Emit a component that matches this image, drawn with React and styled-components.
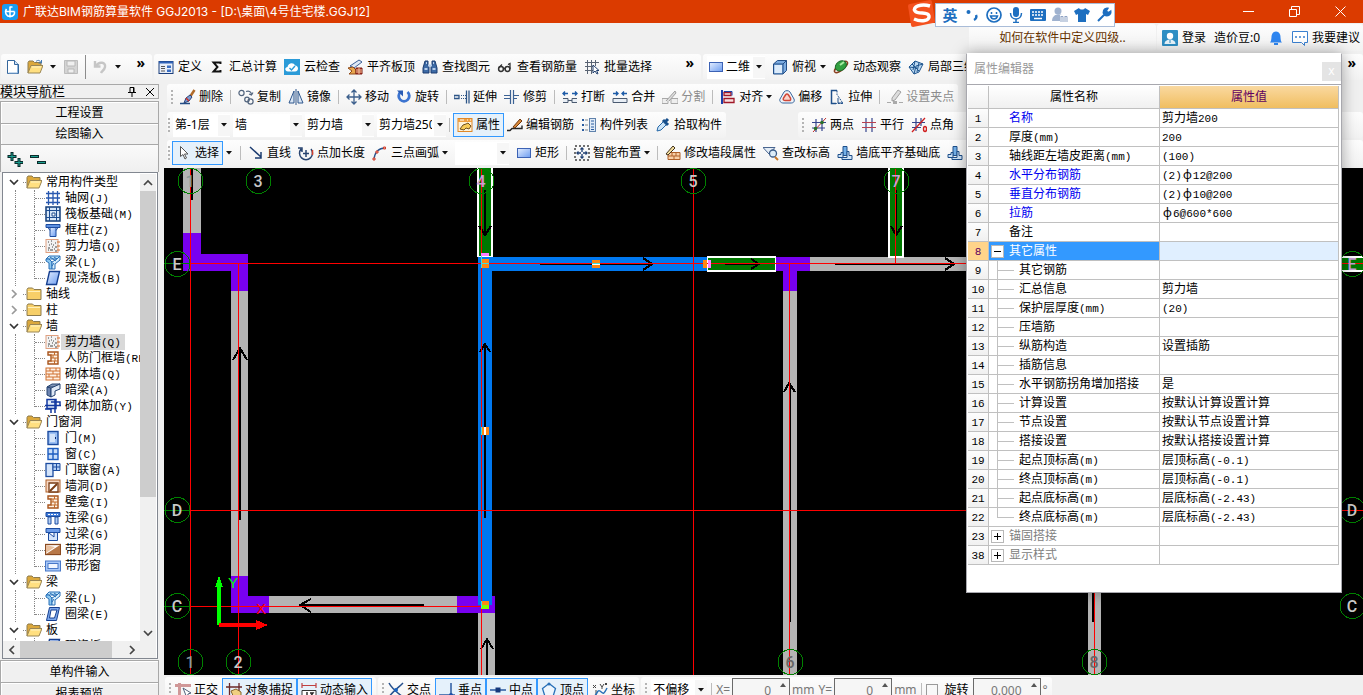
import React from 'react';
import styled, { createGlobalStyle, css } from 'styled-components';

const uiFont = '"Noto Sans", "Noto Sans CJK SC", sans-serif';
const line = '#a8a8a8';

const Global = createGlobalStyle`
  *, *::before, *::after { box-sizing: border-box; }
  body { margin: 0; background: #f0f0f0; overflow: hidden; }
  button, input, select { font: inherit; color: inherit; margin: 0; }
  h1, h2, ul { margin: 0; padding: 0; font: inherit; list-style: none; }
`;

/* ---------- icons ---------- */

const Svg = styled.svg`
  flex: none;
  display: block;
`;

const folderOpen = (
  <>
    <path d="M1 14V3.500l1-1.500h4l1.500 1.500H14V7" fill="#dba83c" stroke="#8d7b4d" />
    <path d="M1 14l3-7.500h12L13 14z" fill="#ffdf80" stroke="#9a8655" />
    <path d="M5 8h9" stroke="#fff3c4" />
  </>
);

const concrete = (
  <>
    <rect x="1" y="1.500" width="12" height="13" fill="#f2f2f2" stroke="#e0a080" />
    <path d="M3 4h1M6 3h1M10 5h1M4 7h1M8 7h1M3 10h2M7 9h1M10 9h2M3 12h1M5 12h3M9 11h1M10 13h2M6 6h1" stroke="#444" />
    <path d="M12 4h3M12 8h3M12 12h3" stroke="#d07030" />
  </>
);

const beam = (
  <>
    <path d="M1 5l3-3h11l-3 3z" fill="#b8e0f8" stroke="#2a70b8" />
    <path d="M1 5h3l3 3v7H4V9L1 7z" fill="#8cc8f0" stroke="#2a70b8" />
    <path d="M7 15V8l5-3 3-3v4l-5 4v5z" fill="#d8effc" stroke="#2a70b8" />
    <path d="M5 3l6 4M9 3l3 2M9 9l-2 3" stroke="#2a70b8" fill="none" />
  </>
);

const hole = (
  <>
    <path d="M3 2h10v12H3v-3h3V5H3z" fill="#fff3e6" stroke="#a8541c" strokeWidth="1.400" />
    <path d="M6 5h7M6 8h7M6 11h7M9.500 2v3M9.500 11v3M8 5v3M10 8v3" stroke="#c06828" />
  </>
);

const icons = {
  app: (
    <>
      <rect x="0" y="0" width="16" height="16" rx="3" fill="#1a9cf0" />
      <path d="M8 2.500v11M4 7.500h8.500M8 3h2.500M4.500 5C2 9 5 12.500 8 12.500s5-2 4.500-5" stroke="#fff" fill="none" strokeWidth="1.500" />
    </>
  ),
  file: (
    <>
      <path d="M2.500 1.500h7l4 4v9h-11z" fill="#fff" stroke="#34669c" />
      <path d="M9.500 1.500v4h4" fill="#cfe2f6" stroke="#34669c" />
      <path d="M12.500 6v8h-9" stroke="#8db4dc" fill="none" />
    </>
  ),
  open: (
    <>
      {folderOpen}
      <path d="M9 2.500c2-2 4-1 5 1M14.500 1v3h-3" stroke="#3f79b5" fill="none" />
    </>
  ),
  folder: folderOpen,
  folderClosed: (
    <>
      <path d="M1 13.500V3.500l1-1.500h4.500L8 3.500h7v10z" fill="#f7cf68" stroke="#8d7b4d" />
      <path d="M2 5.500h12" stroke="#fff0b8" />
    </>
  ),
  save: (
    <>
      <path d="M1.500 1.500h13v13h-13z" fill="#d4d4d4" stroke="#bdbdbd" />
      <path d="M4 2h8v5H4zM5 10h6v4H5z" fill="#efefef" stroke="#b8b8b8" />
    </>
  ),
  undo: (
    <path d="M3 2v5.500h5.500M4 7c3-5 10-4 9 1-.500 3-3 4-4 6" fill="none" stroke="#c6c6c6" strokeWidth="2.400" />
  ),
  define: (
    <>
      <rect x="1" y="2.500" width="14" height="12" fill="#e8eef8" stroke="#1b3f7c" />
      <path d="M1 3.500h14" stroke="#2f62b8" strokeWidth="2" />
      <path d="M3 7.500h4M3 9.500h4M3 12h4" stroke="#555" />
      <path d="M9 6.500h4v2.500H9zM9 10.500h4v2.500H9z" fill="#3a6fc4" />
    </>
  ),
  sigma: <path d="M11.500 5V3.500H4.500L8.500 8 4.500 12.500h7V11" fill="none" stroke="#111" strokeWidth="1.900" />,
  cloud: (
    <>
      <rect x="0" y="0" width="16" height="16" fill="#2b9bd8" />
      <path d="M4 12.500C0 12 1 8 3.500 8 4 3.500 10 3 11 6.500c4 0 4 6 0 6z" fill="#fff" />
      <path d="M5.500 9l2 2 3.500-4" fill="none" stroke="#2b9bd8" strokeWidth="1.400" />
    </>
  ),
  slab: (
    <>
      <path d="M3 7l9-6 3 2-8 6z" fill="#dfe9f5" stroke="#3a5f96" />
      <path d="M1 9l5-1 3 3v4H2l3-3z" fill="#e8a850" stroke="#914b18" />
      <path d="M9 9h6v6H9z" fill="#b03024" stroke="#7a1c12" />
      <path d="M9 11h6M9 13h6M12 9v6" stroke="#f0c8a0" />
    </>
  ),
  find: (
    <>
      <path d="M3 2h3v4l1 2v6H1V9zM10 2h3l2 7v5H9V8l1-2z" fill="#3e6ba6" stroke="#1c3d70" />
      <path d="M6 6.500h4M2.500 10h3M10.500 10h3M4 4h1M11 4h1" stroke="#b8cfec" strokeWidth="2" />
    </>
  ),
  glasses: (
    <>
      <circle cx="4" cy="10" r="2.400" fill="none" stroke="#333" strokeWidth="1.500" />
      <circle cx="10.500" cy="10" r="2.400" fill="none" stroke="#333" strokeWidth="1.500" />
      <path d="M6.500 9.500h2M2 8.500l3-3M13 10V4.500l-2 1" fill="none" stroke="#333" strokeWidth="1.300" />
    </>
  ),
  batch: (
    <>
      <path d="M1 3.500h14M1 7.500h9M1 11.500h8M3.500 1v14M7.500 1v14M11.500 1v6" stroke="#5a6473" fill="none" />
      <path d="M9 6v8l2-2 2 3 1-.500-1.500-3H15z" fill="#fff" stroke="#22406e" />
    </>
  ),
  rect: <rect x="1.500" y="3.500" width="13" height="9" fill="url(#blue)" stroke="#3c62b4" />,
  cube: (
    <>
      <path d="M1.500 5l4-3.500h9v10L11 15H1.500z" fill="#7cabe0" stroke="#234e86" />
      <path d="M1.500 5H11v10M11 5l3.500-3.500" fill="none" stroke="#234e86" />
      <path d="M2.500 6H10v8H2.500z" fill="#dcebfa" />
    </>
  ),
  orbit: (
    <>
      <ellipse cx="8" cy="8" rx="8" ry="3" transform="rotate(-40 8 8)" fill="none" stroke="#8a4020" strokeWidth="1.500" />
      <ellipse cx="8.500" cy="7" rx="6" ry="4.500" transform="rotate(-35 8 8)" fill="#32a040" stroke="#1c6a2a" />
      <path d="M7 6l4-3" stroke="#a6eaa0" strokeWidth="2" />
    </>
  ),
  partial: (
    <>
      <path d="M1 8l6-6 8 3-4 8-5 2z" fill="#bcd9f2" stroke="#1e558e" />
      <path d="M4 5l7 7M1 8l8 1M7 2l-2 9M11 3.500L9 13M6 15l2-8 7-2" fill="none" stroke="#1e558e" />
    </>
  ),
  erase: (
    <>
      <path d="M0 14.500h10" stroke="#234e86" strokeWidth="1.500" />
      <path d="M14.500 1l-4 6" stroke="#b06a28" strokeWidth="2.500" />
      <path d="M10 6l2 2-3 4-5 2 2-5z" fill="#7f9cd0" stroke="#27427a" />
      <path d="M6 9l3 3" stroke="#c83028" strokeWidth="1.500" />
    </>
  ),
  copy: (
    <g fill="none" stroke="#53657e" strokeWidth="1.200">
      <circle cx="3.500" cy="4" r="2.600" />
      <circle cx="9" cy="10.500" r="2.300" />
      <circle cx="12.500" cy="12.500" r="2.600" />
      <path d="M8 2.500c3-1 5 0 5.500 3M15 3.500l-1.500 2.500-2.500-1" />
    </g>
  ),
  mirror: (
    <>
      <path d="M6 2v12H1zM10 2v12h5z" fill="#dbe7f5" stroke="#2e568c" />
      <path d="M8 0v16" stroke="#2e568c" />
    </>
  ),
  move: (
    <path d="M8 1v14M1 8h14M5.500 3.500L8 1l2.500 2.500M5.500 12.500L8 15l2.500-2.500M3.500 5.500L1 8l2.500 2.500M12.500 5.500L15 8l-2.500 2.500" fill="none" stroke="#3c5f8c" strokeWidth="1.300" />
  ),
  rotate: (
    <>
      <path d="M11.500 3a5.300 5.300 0 1 1-7 0" fill="none" stroke="#3c74d0" strokeWidth="2.800" />
      <path d="M1 1.500h6v6z" fill="#2a5cb4" />
    </>
  ),
  extend: (
    <>
      <path d="M0 6.500h5v3H0zM12.500 1.500v13M15 1.500v13" fill="none" stroke="#2e5688" strokeWidth="1.300" />
      <path d="M7 6.500h5M7 9.500h5" stroke="#2e5688" strokeDasharray="1 1" />
    </>
  ),
  trim: (
    <path d="M6.500 1v14M9.500 1v14M0 6.500h6M0 9.500h6M10 6.500h5M10 9.500h3" fill="none" stroke="#3c6294" strokeWidth="1.200" />
  ),
  split: (
    <>
      <path d="M1 9.500h5v4H1M15 9.500h-5v4h5M6 11.500h4" fill="#e8eef5" stroke="#4a5a70" />
      <path d="M1 4.500h5M10 4.500h5M3 2.500l-2 2 2 2M13 2.500l2 2-2 2" fill="none" stroke="#1e5ca8" strokeWidth="1.400" />
    </>
  ),
  merge: (
    <>
      <path d="M1 9.500h14v4H1z" fill="#e8eef5" stroke="#4a5a70" />
      <path d="M1 4.500h5M10 4.500h5M4 2.500l2 2-2 2M12 2.500l-2 2 2 2" fill="none" stroke="#1e5ca8" strokeWidth="1.400" />
    </>
  ),
  cut: (
    <>
      <path d="M0 9.500h6v5H0zM9 9.500h7v5H9z" fill="#eee" stroke="#a8a8a8" />
      <path d="M4 12l9-10 1 2-7 8" fill="#ddd" stroke="#a0a0a0" />
    </>
  ),
  align: (
    <>
      <path d="M2 1v14" stroke="#1c3fa8" strokeWidth="2" />
      <path d="M4 3.500h7v3H4zM4 9.500h10v4H4z" fill="#f8e0e0" stroke="#a01828" strokeWidth="1.300" />
      <path d="M4 2.500h8v4" stroke="#1c3fa8" fill="none" />
    </>
  ),
  offset: (
    <>
      <path d="M5 3a4 4 0 0 1 6 0l4 7c1 3-1 4-3 4H4c-2 0-4-2-3-4z" fill="#f0f3f8" stroke="#38669c" />
      <path d="M6.500 6c1-1.500 2-1.500 3 0l2 3c.500 2 0 2.500-1.500 2.500H6c-2 0-2-1-1.500-2.500z" fill="#fbd3cb" stroke="#d04838" strokeWidth="1.500" />
    </>
  ),
  stretch: (
    <>
      <path d="M8 1.500H2.500v13H7" fill="none" stroke="#1e4f8a" strokeWidth="1.500" />
      <path d="M8 1.500v4l6 9H7" fill="none" stroke="#1e4f8a" strokeDasharray="2 1" />
      <path d="M9 9v5h5" fill="none" stroke="#1e4f8a" />
    </>
  ),
  grip: (
    <>
      <path d="M0 13.500h4M12 13.500h4" stroke="#aaa" />
      <path d="M5 9l6-8 3 2-6 8-3 1z" fill="#ddd" stroke="#a0a0a0" />
      <path d="M6 12h4v3H6z" fill="#aaa" />
    </>
  ),
  props: (
    <>
      <rect x="1" y="1.500" width="14" height="13" fill="#fff2d8" stroke="#e08828" />
      <path d="M1 3.500h14" stroke="#f0a040" strokeWidth="3" />
      <path d="M3 3h4M10 3h1M13 3h1" stroke="#fff" />
      <path d="M3 12l3-4 3-1 2-1 3 3-2 3-3-1-2 2z" fill="#f7cb58" stroke="#70501c" />
    </>
  ),
  editBar: (
    <>
      <path d="M0 13.500h3l2-2h10v-3" fill="none" stroke="#222" strokeWidth="1.400" />
      <path d="M6 10l7-8 2 2-7 7z" fill="#d88838" stroke="#703810" />
    </>
  ),
  list: (
    <>
      <path d="M1 3h2M1 8h2M1 13h2" stroke="#2a5ca0" strokeWidth="2" />
      <path d="M4 3h3M4 8h3M4 13h3" stroke="#808890" />
      <rect x="8.500" y="1.500" width="6" height="13" fill="#e0ebf7" stroke="#6082ac" />
      <path d="M10 4h3M10 7h3M10 10h3M10 12.500h3" stroke="#2a5ca0" />
    </>
  ),
  pick: (
    <>
      <path d="M2 14l1-4 6-6 3 3-6 6z" fill="#cde5f8" stroke="#2668a8" />
      <path d="M8 3l5 5M10 5l3-3" stroke="#174f8c" strokeWidth="3" />
    </>
  ),
  twoPoint: (
    <>
      <path d="M5 2v13M11 1v13M1 5.500h14M1 11h13" stroke="#34448c" strokeWidth="1.200" />
      <path d="M2 15L15 1" stroke="#c03030" />
      <circle cx="4.500" cy="11.500" r="1.800" fill="#287028" />
      <circle cx="11" cy="5.500" r="1.800" fill="#287028" />
    </>
  ),
  parallel: (
    <>
      <path d="M5 1v14M11 1v14" stroke="#34448c" strokeWidth="1.200" />
      <path d="M1 5.500h14M1 10.500h14" stroke="#b84050" strokeWidth="1.200" />
    </>
  ),
  pointAngle: (
    <>
      <path d="M5 1v13M10 1v8M1 5.500h13M1 10.500h9" stroke="#34448c" strokeWidth="1.200" />
      <path d="M1 15L14 1" stroke="#d02020" strokeWidth="1.300" />
      <ellipse cx="14" cy="12" rx="1.500" ry="2.500" fill="none" stroke="#d02020" strokeWidth="1.400" />
    </>
  ),
  cursor: <path d="M4.500 1.500v10l2.500-2 2 4.500 1.500-1-2-4H12z" fill="#fff" stroke="#555" />,
  lineTool: (
    <path d="M2 2l11 10M13 7v6H7" fill="none" stroke="#1c3c70" strokeWidth="1.500" />
  ),
  pointLen: (
    <>
      <path d="M3 4a6.500 6.500 0 1 0 10 0M0 3h4v4M8 5v7M5 8.500h6" fill="none" stroke="#284470" strokeWidth="1.500" />
      <path d="M14.500 10V5" stroke="#d04030" strokeWidth="1.500" />
    </>
  ),
  arc: (
    <>
      <path d="M2 14C3 7 7 3 13 3" fill="none" stroke="#28528c" strokeWidth="1.400" />
      <path d="M1 13h2v2H1zM4 6h2v2H4zM11.500 2h2v2h-2z" fill="#f0b0a0" stroke="#d04030" />
    </>
  ),
  smart: (
    <>
      <rect x="1" y="1" width="14" height="14" fill="none" stroke="#444" strokeDasharray="2 2" strokeWidth="1.500" />
      <path d="M8 3v10M3 8h10" stroke="#1c3c70" strokeWidth="1.300" strokeDasharray="4 2" />
      <path d="M6.500 4.500L8 3l1.500 1.500M6.500 11.500L8 13l1.500-1.500M4.500 6.500L3 8l1.500 1.500M11.500 6.500L13 8l-1.500 1.500" fill="none" stroke="#1c3c70" strokeWidth="1.300" />
    </>
  ),
  editWall: (
    <>
      <path d="M3 7.500h12v7H3z" fill="#f8d0a8" stroke="#b06028" />
      <path d="M3 11h12M7 7.500V11M11 7.500V11M9 11v4" stroke="#b06028" />
      <path d="M1 9l7-8 2 2-7 7z" fill="#f4e0a0" stroke="#42321c" />
    </>
  ),
  elev: (
    <>
      <path d="M0 2.500h12L6 9z" fill="#e4edf6" stroke="#4a6690" />
      <circle cx="10" cy="8.500" r="3.500" fill="#dcecf8" stroke="#3c5c88" strokeWidth="1.300" />
      <path d="M12 12l3 3" stroke="#c87828" strokeWidth="2" />
    </>
  ),
  wallBase: (
    <>
      <path d="M6 1.500h4v9H6z" fill="#74b0e8" stroke="#1e4f8a" />
      <path d="M1 9.500h3v-2h2v5H1zM10 6.500h2v4h3v4H5v-2h5z" fill="#cfe4f8" stroke="#1e4f8a" />
    </>
  ),
  axis: (
    <path d="M1 3.500h14M1 8h14M1 12.500h14M3.500 1v14M8 1v14M12.500 1v14" stroke="#2858b0" strokeWidth="1.300" />
  ),
  raft: (
    <>
      <rect x="1" y="1" width="14" height="14" fill="#d6e6f8" stroke="#123c78" strokeWidth="1.500" />
      <path d="M4.500 4.500h7v7h-7zM4.500 1v14M11.500 1v14M1 4.500h14M1 11.500h14" fill="none" stroke="#1c4c90" />
      <path d="M7 7h3v3H7z" fill="#fff" stroke="#1c4c90" />
    </>
  ),
  column: (
    <>
      <path d="M1 2.500h14v3H1z" fill="#5c8fe0" stroke="#1c4ca0" />
      <path d="M5 5.500h6v9H5z" fill="url(#blue)" stroke="#1c4ca0" />
      <path d="M3 5.500l2 3M13 5.500l-2 3" stroke="#1c4ca0" />
    </>
  ),
  concrete,
  beam,
  plate: <path d="M4.500 1.500h10l-3 13h-10z" fill="url(#blue)" stroke="#163f90" strokeWidth="1.400" />,
  hole,
  brick: (
    <>
      <rect x="1" y="2" width="14" height="12" fill="#fff1e4" stroke="#d07030" />
      <path d="M1 5h14M1 8h14M1 11h14M5 2v3M11 2v3M8 5v3M4 8v3M12 8v3M8 11v3" stroke="#d07030" />
    </>
  ),
  hiddenBeam: (
    <>
      <path d="M2 5l5-3h8l-5 3z" fill="#8498b8" stroke="#22406e" />
      <path d="M2 5l4 1v9l-4-2z" fill="#6c84b0" stroke="#22406e" />
      <path d="M6 6l9-4v5l-5 2v4l-4 2z" fill="#dfe9f6" stroke="#22406e" />
    </>
  ),
  masonry: (
    <>
      <path d="M2 1.500h9v9H2z" fill="#e0ebfa" stroke="#1238a0" strokeWidth="1.500" />
      <path d="M0 7.500h16M0 11h6v4M10 1v14M6 4h9v4" fill="none" stroke="#1238a0" strokeWidth="1.500" />
    </>
  ),
  door: (
    <>
      <rect x="3" y="1.500" width="10" height="13" fill="#9cc0f4" stroke="#1c4ca0" strokeWidth="1.400" />
      <path d="M5 4h5v8H5z" fill="#d4e4fa" />
      <path d="M10.500 7v2" stroke="#0c2c70" />
    </>
  ),
  window: (
    <>
      <rect x="3" y="2.500" width="10" height="11" fill="#c8defa" stroke="#1c5cc0" strokeWidth="1.400" />
      <path d="M8 2v12M3 8h10" stroke="#1c5cc0" strokeWidth="1.400" />
    </>
  ),
  doorWindow: (
    <>
      <rect x="1" y="1.500" width="7" height="13" fill="#d4e4fa" stroke="#1c4ca0" strokeWidth="1.300" />
      <path d="M8 1.500h7v7H8zM11.500 2v6M8 5h7" fill="#b4d0f6" stroke="#1c4ca0" />
    </>
  ),
  wallHole: (
    <>
      <rect x="1" y="2" width="14" height="12" fill="#f7d8c4" stroke="#b06028" />
      <path d="M4 5h9v9H4z" fill="#fff" stroke="#7a3c14" strokeWidth="1.300" />
      <path d="M5 13l7-7" stroke="#7a3c14" strokeWidth="2" />
    </>
  ),
  linkBeam: (
    <>
      <path d="M1 2.500h14v4H1z" fill="#3e7ad8" stroke="#1c4ca0" />
      <path d="M3 7h3v7H3zM10 7h3v7h-3z" fill="#b4d0f6" stroke="#1c4ca0" />
      <path d="M3 4.500h10" stroke="#fff" strokeDasharray="2 1" />
    </>
  ),
  lintel: (
    <>
      <path d="M1 2.500h14v4H1z" fill="#6c9ce8" stroke="#1c4ca0" />
      <path d="M3.500 6.500h9v8h-9z" fill="#d4e4fa" stroke="#1c4ca0" />
      <path d="M4 7l5 4V7" stroke="#1c4ca0" fill="#fff" />
    </>
  ),
  stripHole: (
    <>
      <rect x="0.500" y="2.500" width="15" height="10" fill="#fff" stroke="#8a4a20" strokeWidth="1.300" />
      <path d="M1 12L15 3v9z" fill="#b87848" />
      <path d="M1 3v8l9-6z" fill="#e8c0a0" />
    </>
  ),
  stripWindow: (
    <>
      <rect x="0.500" y="3" width="15" height="10" fill="#a8c8f8" stroke="#4878c8" />
      <rect x="3" y="5.500" width="10" height="5" fill="#f0f6ff" stroke="#4878c8" />
    </>
  ),
  ring: (
    <path fillRule="evenodd" d="M4.500 1.500h10l-3 13h-10zM6 4l-1.500 8H9.500L12 4z" fill="#7ca8ec" stroke="#163f90" />
  ),
  ortho: (
    <>
      <path d="M0 3.500h16M4.500 1v15" stroke="#d09898" strokeWidth="3" />
      <path d="M8 6l4 10 1-4 3-1z" fill="#fff" stroke="#52627c" />
    </>
  ),
  snap: (
    <>
      <path d="M0 5h16M3.500 1v14M13 1v8" stroke="#6a2828" strokeWidth="1.300" />
      <path d="M5 9l5-2 5 3v6H8z" fill="#f0cf80" stroke="#86642c" />
    </>
  ),
  dyn: (
    <>
      <path d="M1 1v5M15 1v5M1 3.500h14" stroke="#c04040" strokeWidth="1.200" />
      <path d="M1 8.500h14v7H1z" fill="#fff" stroke="#333" />
      <path d="M6 10v5M9 11h3l-3 4h3" fill="none" stroke="#222" strokeWidth="1.400" />
    </>
  ),
  cross: (
    <>
      <path d="M1 1c3 6 10 11 14 14M15 1C11 5 4 10 1 15" fill="none" stroke="#26508c" strokeWidth="1.500" />
      <circle cx="8" cy="8" r="2" fill="#1c64c0" />
    </>
  ),
  perp: (
    <>
      <path d="M0 13h16M12 1v12" stroke="#2858a0" strokeWidth="1.500" />
      <circle cx="12" cy="13" r="2" fill="#1c50a8" />
    </>
  ),
  mid: (
    <>
      <path d="M0 8h16" stroke="#2858a0" strokeWidth="1.500" />
      <path d="M5.500 5.500h5v5h-5z" fill="#16387c" />
    </>
  ),
  vertex: (
    <>
      <path d="M8 1.500l6.500 5-2.500 8H4L1.500 6.500z" fill="#eef6fd" stroke="#2870b8" strokeWidth="1.300" />
      <circle cx="8" cy="2" r="1.500" fill="#2870b8" />
    </>
  ),
  coord: (
    <>
      <path d="M1 3l3 3M4 3L1 6M8 2l2 3v2M12 2l-2 3M13 1l2 2M15 1l-2 2M4 8v8" stroke="#444" fill="none" />
      <path d="M1 15c4-1 4-8 7-6s3 5 7-3" fill="none" stroke="#2870b8" strokeWidth="1.500" />
    </>
  ),
  user: (
    <>
      <rect width="16" height="16" rx="1" fill="#2f8fc4" />
      <circle cx="8" cy="6" r="3.200" fill="#fff" />
      <path d="M2.500 14c0-6 11-6 11 0z" fill="#e8f4fb" />
      <path d="M8 10v3" stroke="#2f8fc4" />
    </>
  ),
  bell: (
    <>
      <path d="M2 12.500c2-2 1-6 2-8 1-4 7-4 8 0 1 2 0 6 2 8z" fill="#2f86f0" />
      <path d="M6 14h4" stroke="#2f86f0" strokeWidth="2" />
    </>
  ),
  chat: (
    <>
      <path d="M.500 1.500h15v11h-3v3l-3-3h-9z" fill="#fff" stroke="#3a80d0" />
      <path d="M3 7h2M7 7h2M11 7h2" stroke="#3a80d0" strokeWidth="1.500" />
    </>
  ),
  punct: (
    <>
      <circle cx="4.500" cy="5" r="2" fill="#1e6fc0" />
      <path d="M12 8c1 2 0 4-2 5" fill="none" stroke="#1e6fc0" strokeWidth="2.500" />
    </>
  ),
  smile: (
    <>
      <circle cx="8" cy="8" r="7" fill="none" stroke="#1e6fc0" strokeWidth="1.700" />
      <path d="M4.500 9c1 4 6 4 7 0zM5.500 5v2M10.500 5v2" fill="none" stroke="#1e6fc0" strokeWidth="1.500" />
    </>
  ),
  mic: (
    <>
      <rect x="5" y="0" width="6" height="10" rx="3" fill="#1e6fc0" />
      <path d="M2.500 6c0 8 11 8 11 0M8 12v3M5 15.500h6" fill="none" stroke="#1e6fc0" strokeWidth="1.500" />
    </>
  ),
  keyboard: (
    <>
      <rect x="0" y="2" width="16" height="12" rx="1" fill="#1e6fc0" />
      <path d="M2 5h12M2 8h12" stroke="#fff" strokeWidth="1.500" strokeDasharray="2 1" />
      <path d="M4 11.500h8" stroke="#fff" strokeWidth="1.500" />
    </>
  ),
  person: (
    <>
      <circle cx="6" cy="4" r="3.500" fill="#9fb2cf" />
      <path d="M0 14c0-8 11-8 11-4v4z" fill="#9fb2cf" />
      <path d="M8 8h7v7H8z" fill="#fff" />
      <path d="M9 9.500h2V15M13 9.500h2V15M9 9v6M13 9v6" fill="none" stroke="#8ea3c4" />
    </>
  ),
  shirt: <path d="M5 1c1 2 5 2 6 0l5 3-2 4-2-1v8H4V7L2 8 0 4z" fill="#1e6fc0" />,
  wrench: (
    <path d="M2 14l6.500-6.500M14.500 4.500L12 6 10 4l1.500-2.500C8 1 6.500 5 8.500 7.500 11 9.500 15 8 14.500 4.500z" fill="#1e6fc0" stroke="#1e6fc0" strokeWidth="2" />
  ),
};

const Icon = ({ name, size = 16 }) => (
  <Svg width={size} height={size} viewBox="0 0 16 16" aria-hidden="true">
    {icons[name]}
  </Svg>
);

const Arrow = () => (
  <Svg width="6" height="4" viewBox="0 0 6 4" aria-hidden="true">
    <path d="M0 0h6L3 3.500z" fill="#111" />
  </Svg>
);

const Chevron = ({ dir = 'down', color = '#444' }) => {
  const d = {
    down: 'M1 3l4 4 4-4',
    up: 'M1 7l4-4 4 4',
    left: 'M7 1L3 5l4 4',
    right: 'M3 1l4 4-4 4',
  }[dir];
  return (
    <Svg width="10" height="10" viewBox="0 0 10 10" aria-hidden="true">
      <path d={d} fill="none" stroke={color} strokeWidth="1.700" />
    </Svg>
  );
};

/* ---------- window frame ---------- */

const Page = styled.div`
  position: relative;
  height: 100vh;
  display: flex;
  flex-direction: column;
  overflow: hidden;
  background: #f0f0f0;
  color: #000;
  font: 12px/16px ${uiFont};
  white-space: nowrap;
`;

const TitleBar = styled.header`
  flex: none;
  height: 23px;
  display: flex;
  align-items: center;
  padding-left: 2px;
  background: #db3b00;
  color: #fff;
`;

const Title = styled.h1`
  flex: 1;
  padding-left: 5px;
  font-family: Inter, "Noto Sans CJK SC", sans-serif;
  font-size: 12px;
`;

const CaptionButton = styled.button`
  width: 46px;
  height: 21px;
  padding: 0;
  border: 0;
  background: none;
  display: grid;
  place-items: center;
`;

const ImeBar = styled.div`
  position: absolute;
  top: 0;
  right: 248px;
  width: 208px;
  height: 28px;
  display: flex;
  align-items: center;
`;

const ImeKeys = styled.div`
  flex: 1;
  height: 24px;
  margin-left: -4px;
  margin-top: 2px;
  padding-left: 6px;
  display: flex;
  align-items: center;
  gap: 6px;
  background: #fff;
  border: 1px solid #a9bcd8;
`;

const ImeKey = styled.button`
  width: 16px;
  height: 20px;
  padding: 0;
  border: 0;
  background: none;
  display: grid;
  place-items: center;
  font-size: 15px;
  font-weight: 700;
  color: #1e6fc0;
`;

const HeaderRow = styled.div`
  flex: none;
  height: 31px;
  padding: 1px 0 3px;
  display: flex;
  justify-content: flex-end;
  gap: 1px;
`;

const barFill = css`
  background: linear-gradient(#fdfdfd, #f2f2f2);
  border-radius: 3px;
`;

const Tip = styled.a`
  ${barFill}
  width: 187px;
  display: grid;
  place-items: center;
  color: #663300;
  text-decoration: none;
`;

const Account = styled.div`
  ${barFill}
  width: 206px;
  padding: 0 3px 0 5px;
  display: flex;
  align-items: center;
  justify-content: space-between;
`;

/* ---------- toolbars ---------- */

const TopRow = styled.div`
  flex: none;
  height: 27px;
  padding-left: 1px;
  display: flex;
  gap: 2px;
`;

const Bar = styled.div`
  ${barFill}
  flex: ${(p) => (p.$grow ? '1 1 0' : 'none')};
  width: ${(p) => (p.$w ? `${p.$w}px` : 'auto')};
  height: 26px;
  padding: 0 4px 0 ${(p) => (p.$flush ? 1 : 4)}px;
  display: flex;
  align-items: center;
  gap: ${(p) => p.$gap ?? 7}px;
  overflow: hidden;
`;

const Group = styled.div`
  flex: none;
  display: flex;
  align-items: center;
  gap: ${(p) => p.$gap ?? 0}px;
`;

const ToolButton = styled.button`
  flex: none;
  height: 24px;
  padding: ${(p) => (p.$on ? '0 3px' : 0)};
  border: ${(p) => (p.$on ? '1px solid #3399ff' : 0)};
  background: ${(p) => (p.$on ? '#e5f1fb' : 'none')};
  color: ${(p) => (p.$off ? '#8c8c8c' : '#000')};
  display: flex;
  align-items: center;
  gap: ${(p) => p.$gap ?? 3}px;
`;

const Tool = ({ icon, children, menu, on, off, gap }) => (
  <ToolButton type="button" $on={on} $off={off} $gap={gap} aria-label={children ? undefined : icon}>
    <Icon name={icon} />
    {children}
    {menu && <Arrow />}
  </ToolButton>
);

const MenuButton = styled.button`
  flex: none;
  width: 8px;
  height: 20px;
  padding: 0;
  border: 0;
  background: none;
  display: grid;
  place-items: center;
`;

const More = styled.button`
  flex: none;
  margin-left: auto;
  align-self: flex-start;
  height: 18px;
  padding: 0 3px;
  border: 0;
  background: none;
  font-size: 14px;
  line-height: 14px;
  font-weight: 700;
`;

const Sep = styled.span`
  flex: none;
  width: 1px;
  height: ${(p) => (p.$tall ? 24 : 14)}px;
  background: ${(p) => (p.$tall ? '#8c8c8c' : '#bcbcbc')};
`;

const Grip = styled.span`
  flex: none;
  width: 2px;
  height: 15px;
  background: repeating-linear-gradient(#b4b4b4 0 2px, transparent 2px 4px);
`;

const ComboBox = styled.span`
  flex: none;
  position: relative;
  width: ${(p) => p.$w}px;
  height: 23px;
  display: flex;
  align-items: center;
  background: #fff;

  > svg:last-child {
    position: absolute;
    right: 3px;
    pointer-events: none;
  }

  > svg:first-child:not(:last-child) {
    margin-left: 1px;
  }

  &::after {
    content: '';
    order: 2;
    flex: none;
    width: 12px;
    height: 21px;
    background: #f6f6f6;
  }
`;

const ComboSelect = styled.select`
  appearance: none;
  flex: 1;
  min-width: 0;
  height: 23px;
  padding: 0 2px;
  border: 0;
  background: none;
  overflow: hidden;
`;

const Combo = ({ value, w, icon, label }) => (
  <ComboBox $w={w}>
    {icon && <Icon name={icon} />}
    <ComboSelect aria-label={label} defaultValue={value}>
      <option>{value}</option>
    </ComboSelect>
    <Arrow />
  </ComboBox>
);

const Body = styled.div`
  flex: 1;
  min-height: 0;
  display: flex;
  gap: 5px;
`;

const Main = styled.main`
  flex: 1;
  min-width: 0;
  display: flex;
  flex-direction: column;
  padding-top: 3px;
  gap: 2px;
`;

const ToolRow = styled.div`
  flex: none;
  height: 26px;
  padding-left: 3px;
  display: flex;
  gap: ${(p) => p.$gap ?? 2}px;
  overflow: hidden;
`;

const StatusRow = styled.div`
  flex: none;
  height: 18px;
  display: flex;
  align-items: flex-start;
  gap: 2px;
  padding-left: 1px;
  overflow: hidden;
`;

const Field = styled.label`
  flex: none;
  display: flex;
  align-items: center;
  gap: 2px;
  color: #777;
`;

const Spin = styled.span`
  position: relative;
  display: block;

  svg {
    position: absolute;
    top: 5px;
    right: 4px;
  }
`;

const SpinInput = styled.input`
  display: block;
  width: ${(p) => p.$w}px;
  height: 24px;
  padding: 0 18px 0 0;
  border: 1px solid #6a6a6a;
  background: #f6f6f6;
  color: #777;
  font-size: 12px;
  text-align: right;
`;

const NumberField = ({ w = 58, ...rest }) => (
  <Spin>
    <SpinInput type="text" $w={w} {...rest} />
    <svg width="6" height="4" viewBox="0 0 6 4" aria-hidden="true">
      <path d="M0 4h6L3 0z" fill="#555" />
    </svg>
  </Spin>
);

const Check = styled.label`
  display: flex;
  align-items: center;
  gap: 7px;

  input {
    appearance: none;
    width: 12px;
    height: 12px;
    border: 1px solid #9a9a9a;
    background: #f8f8f8;
  }
`;

/* ---------- sidebar ---------- */

const Sidebar = styled.aside`
  flex: none;
  width: 159px;
  padding-top: 3px;
  display: flex;
  flex-direction: column;
  overflow: hidden;
`;

const PaneTitle = styled.div`
  flex: none;
  height: 15px;
  display: flex;
  align-items: center;
  gap: 6px;
  padding-right: 1px;
  border: 1px solid ${line};
  border-left: 0;
  line-height: 13px;

  h2 { flex: 1; font-size: 13px; line-height: 13px; }
  button { width: 12px; height: 12px; padding: 0; border: 0; background: none; }
`;

const PaneButton = styled.button`
  flex: none;
  height: 22px;
  padding: 0;
  border: 1px solid ${line};
  border-bottom-width: ${(p) => (p.$last ? '1px' : 0)};
  background: #f0f0f0;
  box-shadow: inset 1px 1px #fff;
`;

const PaneTop = styled.div`
  display: flex;
  flex-direction: column;
  padding-top: 2px;
`;

const PaneTools = styled.div`
  flex: none;
  height: 27px;
  padding: 7px 6px;
  display: flex;
  gap: 6px;
  border-left: 1px solid ${line};
  border-right: 1px solid ${line};
  background: linear-gradient(#fafafa, #efefef);

  button { padding: 0; border: 0; background: none; height: 15px; }
`;

const PaneBottom = styled.div`
  flex: none;
  height: 35px;
  margin-top: 1px;
  display: flex;
  flex-direction: column;
  overflow: hidden;
`;

const TreeBox = styled.div`
  flex: 1;
  min-height: 0;
  margin: 0 1px 0 2px;
  padding: 1px 1px 0 0;
  border: 1px solid #828790;
  background: #fff;
  display: grid;
  grid-template: minmax(0, 1fr) 17px / minmax(0, 1fr) 16px;
`;

const TreeList = styled.ul`
  overflow: hidden;
`;

const TreeRow = styled.li`
  height: 16px;
  display: flex;
  align-items: center;
`;

const Twist = styled.button`
  flex: none;
  width: 20px;
  height: 16px;
  padding: 0 0 0 2px;
  border: 0;
  background: none;
  display: grid;
  place-items: center;
`;

const Dots = styled.span`
  flex: none;
  width: ${(p) => p.$w}px;
  border-top: 1px dotted #888;
`;

const Guide = styled.span`
  flex: none;
  align-self: ${(p) => (p.$half ? 'flex-start' : 'stretch')};
  height: ${(p) => (p.$half ? '9px' : 'auto')};
  width: ${(p) => p.$w}px;
  border-right: 1px dotted #888;
`;

const NodeLabel = styled.button`
  flex: none;
  height: 16px;
  padding: 0 4px;
  border: 0;
  background: ${(p) => (p.$on ? '#d9d9d9' : 'none')};
  line-height: 16px;
`;

const Mono = styled.span`
  font-family: "Liberation Mono", monospace;
  font-size: 11px;
  line-height: 1;
`;

/* Latin runs take about half the width of a Chinese character. */
const Mixed = ({ text }) =>
  text.split(/([\x20-\x7e]+)/).filter(Boolean).map((part, i) =>
    /^[\x20-\x7e]/.test(part) ? <Mono key={i}>{part}</Mono> : part
  );

const ScrollTrack = styled.div`
  display: flex;
  flex-direction: ${(p) => (p.$across ? 'row' : 'column')};
  align-items: center;
  background: #f0f0f0;

  button {
    flex: none;
    width: 17px;
    height: 17px;
    padding: 0;
    border: 0;
    background: none;
    display: grid;
    place-items: center;
  }
  i {
    flex: 0 0 ${(p) => p.$thumb};
    align-self: stretch;
    background: #cdcdcd;
  }
  button:last-child { margin-${(p) => (p.$across ? 'left' : 'top')}: auto; }
`;

const tree = [
  ['常用构件类型', [['axis', '轴网(J)'], ['raft', '筏板基础(M)'], ['column', '框柱(Z)'], ['concrete', '剪力墙(Q)'], ['beam', '梁(L)'], ['plate', '现浇板(B)']]],
  ['轴线', null],
  ['柱', null],
  ['墙', [['concrete', '剪力墙(Q)', true], ['hole', '人防门框墙(RF)'], ['brick', '砌体墙(Q)'], ['hiddenBeam', '暗梁(A)'], ['masonry', '砌体加筋(Y)']]],
  ['门窗洞', [['door', '门(M)'], ['window', '窗(C)'], ['doorWindow', '门联窗(A)'], ['wallHole', '墙洞(D)'], ['hole', '壁龛(I)'], ['linkBeam', '连梁(G)'], ['lintel', '过梁(G)'], ['stripHole', '带形洞'], ['stripWindow', '带形窗']]],
  ['梁', [['beam', '梁(L)'], ['ring', '圈梁(E)']]],
  ['板', [['plate', '现浇板(B)']]],
];

const Tree = () => (
  <TreeBox>
    <TreeList>
      {tree.map(([name, kids]) => (
        <React.Fragment key={name}>
          <TreeRow>
            <Twist type="button" aria-label={name}>
              <Chevron dir={kids ? 'down' : 'right'} color={kids ? '#333' : '#999'} />
            </Twist>
            <Dots $w={3} />
            <Icon name={kids ? 'folder' : 'folderClosed'} />
            <NodeLabel type="button">{name}</NodeLabel>
          </TreeRow>
          {(kids || []).map(([icon, label, on], i) => (
            <TreeRow key={label}>
              <Guide $w={13} />
              <Guide $w={19} $half={i === kids.length - 1} />
              <Dots $w={10} />
              <Icon name={icon} />
              <NodeLabel type="button" $on={on}><Mixed text={label} /></NodeLabel>
            </TreeRow>
          ))}
        </React.Fragment>
      ))}
    </TreeList>
    <ScrollTrack $thumb="306px">
      <button type="button" aria-label="向上"><Chevron dir="up" /></button>
      <i />
      <button type="button" aria-label="向下"><Chevron /></button>
    </ScrollTrack>
    <ScrollTrack $across $thumb="92px">
      <button type="button" aria-label="向左"><Chevron dir="left" /></button>
      <i />
      <button type="button" aria-label="向右"><Chevron dir="right" /></button>
    </ScrollTrack>
    <ScrollTrack $thumb="0px" />
  </TreeBox>
);

/* ---------- drawing ---------- */

const Stage = styled.div`
  flex: 1;
  min-height: 0;
  overflow: hidden;
  background: #000;

  svg { display: block; width: 100%; height: 100%; }
  text { font: 500 16px Roboto, sans-serif; text-anchor: middle; }
  .ucs { font: 300 15px "Liberation Sans", sans-serif; }
`;

const grey = '#b4b4b4';
const purple = '#7800f0';
const blue = '#0078f0';
const green = '#007800';

const walls = [
  [183, 168, 18, 65, grey], [183, 233, 18, 38, purple], [183, 254, 65, 17, purple], [231, 254, 17, 37, purple],
  [231, 291, 17, 285, grey], [231, 576, 17, 37, purple], [231, 596, 38, 17, purple], [269, 596, 188, 17, grey],
  [457, 596, 38, 17, purple], [478, 613, 17, 70, grey],
  [477, 168, 16, 89, '#fff'], [479, 168, 12, 88, green],
  [478, 257, 229, 14, blue], [478, 257, 14, 348, blue],
  [707, 256, 69, 16, '#fff'], [708, 258, 67, 12, green],
  [776, 257, 34, 14, purple], [783, 257, 14, 34, purple], [783, 291, 14, 390, grey], [810, 257, 532, 14, grey],
  [888, 168, 16, 90, '#fff'], [890, 168, 12, 88, green],
  [1088, 271, 13, 412, grey],
  [1342, 256, 200, 16, '#fff'], [1342, 258, 200, 12, green],
];

const light = '#c8c8c8';
const overWall = '#666';
const overGreen = '#c8a0d8';

const bubbles = [
  ['1', 190, 181, '#889898'], ['3', 258, 181, light], ['4', 481, 181, overGreen], ['5', 693, 181, light],
  ['7', 896, 181, overGreen], ['E', 177, 264, light], ['D', 177, 510, light], ['C', 177, 606, light],
  ['1', 190, 662, '#889898'], ['2', 238, 662, light], ['6', 790, 662, overWall], ['8', 1094, 662, overWall],
  ['E', 1352, 264, overGreen], ['D', 1352, 510, light], ['C', 1352, 606, light],
];

const Drawing = () => (
  <Stage>
    <svg role="img" aria-label="剪力墙平面图">
      <defs>
        <linearGradient id="blue" x1="0" y1="0" x2="1" y2="1">
          <stop offset="0" stopColor="#e4eeff" />
          <stop offset="1" stopColor="#6c9cf0" />
        </linearGradient>
      </defs>
      <g transform="translate(-164 -168)" shapeRendering="crispEdges">
        {walls.map(([x, y, w, h, fill]) => (
          <rect key={`${x}-${y}-${w}-${h}`} x={x} y={y} width={w} height={h} fill={fill} />
        ))}
        <g stroke="#000" strokeWidth="2" fill="none">
          <path d="M192 168v32M240 349v171M233 360l7-12 7 12" />
          <path d="M485 345v173M480 352l5-8 5 8M487 640v43M481 649l6-10 6 10" />
          <path d="M485 190v45M479 226l6 9 6-9M896 190v45M891 226l5 9 6-9" />
          <path d="M790 384v238M784 392l5-9 6 9M1093 592v30" />
          <path d="M300 605h124M311 599l-11 6 11 7" />
          <path d="M540 264h112M643 258l9 6-9 6M725 264h34M751 259l8 5-8 5M835 264h119M945 258l9 6-9 6" />
        </g>
        <path d="M190.500 168v520M238.500 264v424M481.500 168v520M693.500 168v520M789.500 263v425M895.500 168v95M1094.500 263v425M190 263.500h1400M190 510.500h1400M190 606.500h291" stroke="#f00" />
        <path d="M164 263.500h26M164 510.500h26M164 606.500h26" stroke="#008000" />
        <g fill="#ff8714">
          <path d="M481 259h8v9h-8zM592 260h8v8h-8zM703 260h4v8h-4zM481 427h8v8h-8zM481 601h8v4h-8z" />
          <path d="M481 253h8v3h-8zM708 260h3v8h-3z" fill="#ff80ff" />
          <path d="M484 427h2v8h-2zM592 264h8v1h-8z" fill="#fff" />
          <path d="M481 605h8v4h-8z" fill="#80ff00" />
          <path d="M481 256h1v12h-1zM481 263h8v1h-8zM481 427h1v8h-1zM592 263h8v1h-8zM481 601h1v7h-1z" fill="#40e0e0" />
        </g>
        <path d="M219 625v-44" stroke="#0f0" strokeWidth="4" />
        <path d="M219 576l4 11h-8z" fill="#0f0" />
        <path d="M219 625h40" stroke="#f00" strokeWidth="4" />
        <path d="M268 625l-12-5v10z" fill="#f00" />
        {bubbles.map(([t, x, y, fill]) => (
          <g key={`${t}-${x}-${y}`}>
            <circle cx={x + 0.5} cy={y} r="12.500" fill="none" stroke="#008000" />
            <text x={x} y={y + 6} fill={fill}>{t}</text>
          </g>
        ))}
        <text className="ucs" x="233" y="588" fill="#0f0">Y</text>
        <text className="ucs" x="261" y="614" fill="#f00">X</text>
      </g>
    </svg>
  </Stage>
);

/* ---------- property editor ---------- */

const Editor = styled.section`
  position: absolute;
  top: 53px;
  right: 21px;
  width: 376px;
  height: 540px;
  background: #fff;
  border: 1px solid #a8a8ae;
  border-top-color: #fff;
  box-shadow: 0 0 14px rgba(0, 0, 0, 0.35);
`;

const EditorTitle = styled.div`
  height: 30px;
  padding: 0 0 0 7px;
  display: flex;
  align-items: center;
  justify-content: space-between;
  color: #999;

  button {
    width: 19px;
    height: 19px;
    margin-top: 4px;
    padding: 0;
    border: 0;
    background: #e4e4e4;
    color: #fff;
    line-height: 16px;
  }
`;

const GridFrame = styled.div`
  border-top: 1px solid #a8a8ae;
  padding: 1px 0 0 1px;
`;

const Grid = styled.table`
  width: 371px;
  table-layout: fixed;
  border-collapse: separate;
  border-spacing: 0;

  th, td {
    height: 19px;
    padding: 0 2px;
    border-right: 1px solid #c0c0c0;
    border-bottom: 1px solid #c0c0c0;
    line-height: 16px;
    text-align: left;
    font-weight: 400;
    overflow: hidden;
  }
  thead th {
    height: 23px;
    text-align: center;
    background: linear-gradient(#fff, #f0f0f0);
  }
  thead th:last-child {
    background: linear-gradient(#fad9a0, #f0be60);
    color: #600060;
  }
`;

const RowNo = styled.th`
  && {
    padding: 0;
    text-align: center;
    background: ${(p) => (p.$on ? '#ffd48a' : 'linear-gradient(#fdfdfd, #f0f0f0)')};
    color: ${(p) => (p.$on ? '#600060' : '#000')};
  }
`;

const NameCell = styled.td`
  && {
    padding: 0;
    background: ${(p) => (p.$on ? '#3399ff' : '#fff')};
    color: ${(p) => p.$color};
  }
  > div {
    height: 18px;
    display: flex;
    align-items: center;
    padding-left: ${(p) => (p.$deep ? 8 : p.$box ? 2 : 20)}px;
  }
`;

const ValueCell = styled.td`
  && { background: ${(p) => (p.$on ? '#e0efff' : '#fff')}; }
`;

const Branch = styled.span`
  flex: none;
  width: 22px;
  height: 18px;
  background:
    linear-gradient(#c0c0c0, #c0c0c0) 0 0 / 1px ${(p) => (p.$last ? '10px' : '18px')} no-repeat,
    linear-gradient(#c0c0c0, #c0c0c0) 0 9px / 17px 1px no-repeat;
`;

const Expander = styled.button`
  flex: none;
  width: 13px;
  height: 13px;
  margin-right: 5px;
  padding: 0;
  border: 1px solid #b8b8b8;
  background: #fff;
  display: grid;
  place-items: center;
`;

const Rebar = styled.span`
  display: inline-block;
  width: 11px;
  line-height: 14px;
  text-align: center;
  text-decoration: ${(p) => (p.$ribbed ? 'underline' : 'none')};
  text-underline-offset: -2px;
`;

const properties = [
  [1, '名称', '剪力墙200', 'key'], [2, '厚度(mm)', '200'], [3, '轴线距左墙皮距离(mm)', '(100)'],
  [4, '水平分布钢筋', ['(2)', true, '12@200'], 'key'], [5, '垂直分布钢筋', ['(2)', true, '10@200'], 'key'],
  [6, '拉筋', ['', false, '6@600*600'], 'key'], [7, '备注', ''], [8, '其它属性', '', 'open'],
  [9, '其它钢筋', '', 'deep'], [10, '汇总信息', '剪力墙', 'deep'], [11, '保护层厚度(mm)', '(20)', 'deep'],
  [12, '压墙筋', '', 'deep'], [13, '纵筋构造', '设置插筋', 'deep'], [14, '插筋信息', '', 'deep'],
  [15, '水平钢筋拐角增加搭接', '是', 'deep'], [16, '计算设置', '按默认计算设置计算', 'deep'],
  [17, '节点设置', '按默认节点设置计算', 'deep'], [18, '搭接设置', '按默认搭接设置计算', 'deep'],
  [19, '起点顶标高(m)', '层顶标高(-0.1)', 'deep'], [20, '终点顶标高(m)', '层顶标高(-0.1)', 'deep'],
  [21, '起点底标高(m)', '层底标高(-2.43)', 'deep'], [22, '终点底标高(m)', '层底标高(-2.43)', 'deep'],
  [23, '锚固搭接', '', 'closed'], [38, '显示样式', '', 'closed'],
];

const nameColors = { key: '#0000f0', open: '#fff', closed: '#808080' };

const PropertyEditor = () => (
  <Editor>
    <EditorTitle>
      <h2>属性编辑器</h2>
      <button type="button" aria-label="关闭">x</button>
    </EditorTitle>
    <GridFrame>
      <Grid>
        <colgroup>
          <col width="21" />
          <col width="171" />
          <col width="179" />
        </colgroup>
        <thead>
          <tr><th /><th>属性名称</th><th>属性值</th></tr>
        </thead>
        <tbody>
          {properties.map(([no, name, value, kind]) => {
            const on = kind === 'open';
            const box = on || kind === 'closed';
            return (
              <tr key={no}>
                <RowNo $on={on}><Mixed text={String(no)} /></RowNo>
                <NameCell $on={on} $box={box} $deep={kind === 'deep'} $color={nameColors[kind] ?? '#000'}>
                  <div>
                    {kind === 'deep' && <Branch $last={no === 22} />}
                    {box && (
                      <Expander type="button" aria-label={name}>
                        <Svg width="9" height="9" viewBox="0 0 9 9" aria-hidden="true">
                          <path d={on ? 'M1 4.500h7' : 'M1 4.500h7M4.500 1v7'} stroke="#000" />
                        </Svg>
                      </Expander>
                    )}
                    <span><Mixed text={name} /></span>
                  </div>
                </NameCell>
                <ValueCell $on={on}>
                  {Array.isArray(value) ? (
                    <>
                      <Mixed text={value[0]} />
                      <Rebar $ribbed={value[1]}>ф</Rebar>
                      <Mixed text={value[2]} />
                    </>
                  ) : (
                    <Mixed text={value} />
                  )}
                </ValueCell>
              </tr>
            );
          })}
        </tbody>
      </Grid>
    </GridFrame>
  </Editor>
);

const LinkButton = styled.button`
  padding: 0;
  border: 0;
  background: none;
  display: flex;
  align-items: center;
  gap: 4px;
`;

export default function App() {
  return (
    <Page>
      <Global />
      <TitleBar>
        <Icon name="app" />
        <Title>广联达BIM钢筋算量软件 GGJ2013 - [D:\桌面\4号住宅楼.GGJ12]</Title>
        <CaptionButton type="button" aria-label="最小化">
          <Svg width="11" height="11"><path d="M0 5.500h11" stroke="#fff" /></Svg>
        </CaptionButton>
        <CaptionButton type="button" aria-label="还原">
          <Svg width="11" height="11"><path d="M.500 3.500h7v7h-7zM2.500 3V.500h8v8H8" fill="none" stroke="#fff" /></Svg>
        </CaptionButton>
        <CaptionButton type="button" aria-label="关闭窗口">
          <Svg width="11" height="11"><path d="M.500.500l10 10M10.500.500l-10 10" stroke="#fff" /></Svg>
        </CaptionButton>
      </TitleBar>

      <ImeBar>
        <Svg width="32" height="28" viewBox="0 0 32 28" aria-hidden="true">
          <path d="M1 6q0-2 2-2L23 0q2 0 2 2l3 19q0 2-2 2L6 27q-2 0-2-2z" fill="#f4511e" />
          <path d="M23 6C14 3 5 7 8 11s13 0 14 5-8 6-15 3" fill="none" stroke="#fff" strokeWidth="3.500" />
        </Svg>
        <ImeKeys>
          <ImeKey type="button">英</ImeKey>
          {['punct', 'smile', 'mic', 'keyboard', 'person', 'shirt', 'wrench'].map((n) => (
            <ImeKey key={n} type="button" aria-label={n}><Icon name={n} /></ImeKey>
          ))}
        </ImeKeys>
      </ImeBar>

      <HeaderRow>
        <Tip href="#help">如何在软件中定义四级..</Tip>
        <Account>
          <LinkButton type="button"><Icon name="user" />登录</LinkButton>
          <span>造价豆:0</span>
          <LinkButton type="button" aria-label="通知"><Icon name="bell" /></LinkButton>
          <LinkButton type="button"><Icon name="chat" />我要建议</LinkButton>
        </Account>
      </HeaderRow>

      <TopRow>
        <Bar $w={151} $gap={6}>
          <Tool icon="file" />
          <Tool icon="open" />
          <MenuButton type="button" aria-label="打开菜单"><Arrow /></MenuButton>
          <Tool icon="save" />
          <Sep $tall />
          <Tool icon="undo" off />
          <MenuButton type="button" aria-label="撤销菜单"><Arrow /></MenuButton>
          <More type="button">»</More>
        </Bar>
        <Bar $w={547}>
          <Tool icon="define" gap={4}>定义</Tool>
          <Tool icon="sigma" gap={4}>汇总计算</Tool>
          <Tool icon="cloud" gap={4}>云检查</Tool>
          <Tool icon="slab" gap={4}>平齐板顶</Tool>
          <Tool icon="find" gap={4}>查找图元</Tool>
          <Tool icon="glasses" gap={4}>查看钢筋量</Tool>
          <Tool icon="batch" gap={4}>批量选择</Tool>
          <More type="button">»</More>
        </Bar>
        <Bar $grow>
          <Combo label="视图" icon="rect" value="二维" w={58} />
          <Tool icon="cube" menu gap={4}>俯视</Tool>
          <Tool icon="orbit" gap={4}>动态观察</Tool>
          <Tool icon="partial" gap={4}>局部三维</Tool>
          <More type="button">»</More>
        </Bar>
      </TopRow>

      <Body>
        <Sidebar>
          <PaneTitle>
            <h2>模块导航栏</h2>
            <button type="button" aria-label="固定">
              <Svg width="10" height="11" viewBox="0 0 10 11"><path d="M3 1.500h4v5H3zM1 6.500h8M5 7v4M6.500 1.500v5" fill="none" stroke="#000" /></Svg>
            </button>
            <button type="button" aria-label="关闭导航栏">
              <Svg width="10" height="11" viewBox="0 0 10 11"><path d="M1 2l8 8M9 2l-8 8" stroke="#000" /></Svg>
            </button>
          </PaneTitle>
          <PaneTop>
            <PaneButton type="button">工程设置</PaneButton>
            <PaneButton type="button" $last>绘图输入</PaneButton>
          </PaneTop>
          <PaneTools>
            <button type="button" aria-label="全部展开">
              <Svg width="16" height="15"><path d="M5 0v9M.500 4.500h9M12 6v9M7.500 10.500h9" stroke="#0b2b2b" strokeWidth="3" /><path d="M5 1v7M1.500 4.500h7M12 7v7M8.500 10.500h7" stroke="#1aa090" /></Svg>
            </button>
            <button type="button" aria-label="全部折叠">
              <Svg width="18" height="15"><path d="M1 4.500h9M8 10.500h9" stroke="#0b2b2b" strokeWidth="3" /><path d="M2 4.500h7M9 10.500h7" stroke="#1aa090" /></Svg>
            </button>
          </PaneTools>
          <Tree />
          <PaneBottom>
            <PaneButton type="button">单构件输入</PaneButton>
            <PaneButton type="button">报表预览</PaneButton>
          </PaneBottom>
        </Sidebar>

        <Main>
          <ToolRow>
            <Bar>
              <Grip />
              <Tool icon="erase">删除</Tool>
              <Sep />
              <Tool icon="copy">复制</Tool>
              <Tool icon="mirror">镜像</Tool>
              <Sep />
              <Tool icon="move">移动</Tool>
              <Tool icon="rotate">旋转</Tool>
              <Sep />
              <Tool icon="extend">延伸</Tool>
              <Tool icon="trim">修剪</Tool>
              <Sep />
              <Tool icon="split">打断</Tool>
              <Tool icon="merge">合并</Tool>
              <Tool icon="cut" off>分割</Tool>
              <Sep />
              <Tool icon="align" menu>对齐</Tool>
              <Tool icon="offset">偏移</Tool>
              <Tool icon="stretch">拉伸</Tool>
              <Sep />
              <Tool icon="grip" off>设置夹点</Tool>
            </Bar>
          </ToolRow>
          <ToolRow $gap={72}>
            <Bar $gap={3} $flush>
              <Grip />
              <Combo label="楼层" value="第-1层" w={57} />
              <Combo label="构件类型" value="墙" w={69} />
              <Combo label="构件" value="剪力墙" w={69} />
              <Combo label="构件名称" value="剪力墙250" w={69} />
              <Sep />
              <Tool icon="props" on>属性</Tool>
              <Group $gap={7}>
                <Tool icon="editBar">编辑钢筋</Tool>
                <Tool icon="list">构件列表</Tool>
                <Tool icon="pick">拾取构件</Tool>
              </Group>
            </Bar>
            <Bar $grow>
              <Grip />
              <Tool icon="twoPoint">两点</Tool>
              <Tool icon="parallel">平行</Tool>
              <Tool icon="pointAngle">点角</Tool>
            </Bar>
          </ToolRow>
          <ToolRow>
            <Bar $grow $flush>
              <Group $gap={2}>
                <Grip />
                <Tool icon="cursor" on>选择</Tool>
                <MenuButton type="button" aria-label="选择方式"><Arrow /></MenuButton>
              </Group>
              <Sep />
              <Tool icon="lineTool">直线</Tool>
              <Tool icon="pointLen">点加长度</Tool>
              <Tool icon="arc" menu>三点画弧</Tool>
              <Combo label="半径" value="" w={54} />
              <Tool icon="rect">矩形</Tool>
              <Sep />
              <Tool icon="smart" menu>智能布置</Tool>
              <Sep />
              <Tool icon="editWall">修改墙段属性</Tool>
              <Tool icon="elev">查改标高</Tool>
              <Tool icon="wallBase">墙底平齐基础底</Tool>
              <Tool icon="wallBase" />
            </Bar>
          </ToolRow>
          <Drawing />
          <StatusRow>
            <Bar $gap={4}>
              <Grip />
              <Tool icon="ortho">正交</Tool>
              <Group>
                <Tool icon="snap" on>对象捕捉</Tool>
                <Tool icon="dyn" on>动态输入</Tool>
              </Group>
            </Bar>
            <Bar $gap={4}>
              <Grip />
              <Tool icon="cross">交点</Tool>
              <Group>
                <Tool icon="perp" on>垂点</Tool>
                <Tool icon="mid" on>中点</Tool>
                <Tool icon="vertex" on>顶点</Tool>
              </Group>
              <Tool icon="coord">坐标</Tool>
            </Bar>
            <Bar $gap={4}>
              <Grip />
              <Combo label="偏移方式" value="不偏移" w={56} />
              <Sep />
              <Field>X=<NumberField defaultValue="0" />mm</Field>
              <Field>Y=<NumberField defaultValue="0" />mm</Field>
              <Sep />
              <Check><input type="checkbox" />旋转</Check>
              <Field><NumberField w={68} defaultValue="0.000" aria-label="旋转角度" />°</Field>
            </Bar>
          </StatusRow>
        </Main>
      </Body>

      <PropertyEditor />
    </Page>
  );
}
